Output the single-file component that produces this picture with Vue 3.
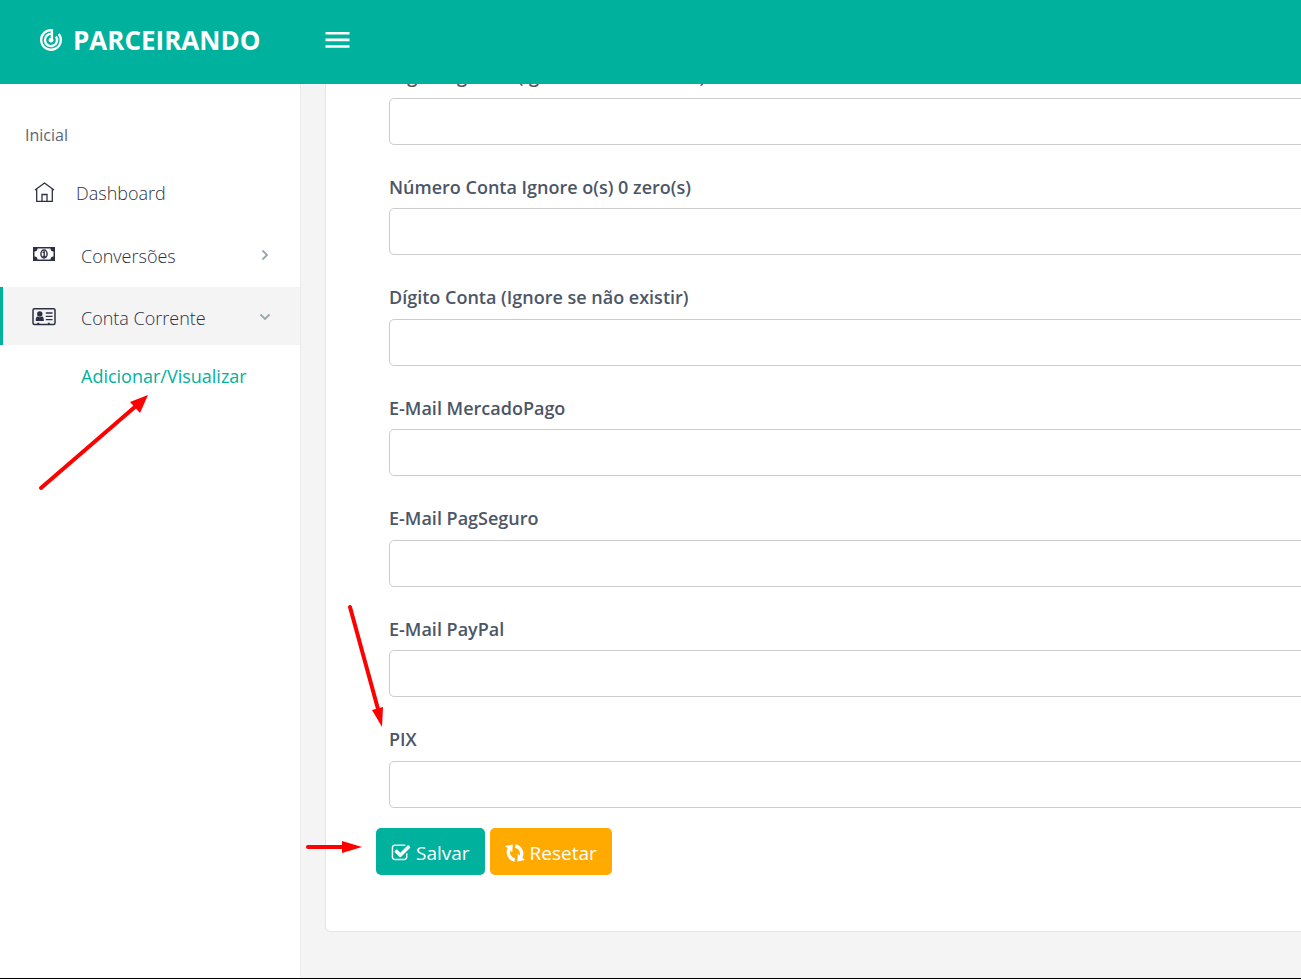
<script setup>
const fields = [
  { id: 'digito-agencia', label: 'Dígito Agência (Ignore se não existir)' },
  { id: 'numero-conta', label: 'Número Conta Ignore o(s) 0 zero(s)' },
  { id: 'digito-conta', label: 'Dígito Conta (Ignore se não existir)' },
  { id: 'mercadopago', label: 'E-Mail MercadoPago' },
  { id: 'pagseguro', label: 'E-Mail PagSeguro' },
  { id: 'paypal', label: 'E-Mail PayPal' },
  { id: 'pix', label: 'PIX' },
]
</script>

<template>
  <div class="app">
    <header class="topbar">
      <a class="brand" href="#">
        <svg class="brand-icon" viewBox="0 0 22 22" fill="none" stroke="#fff" stroke-width="2.4">
          <path d="M12 1.200A9.800 9.800 0 1 0 18.800 5" />
          <path d="M12 5A6.100 6.100 0 1 0 16 7.500" />
          <path d="M11.900 0.100V11" />
          <circle cx="11" cy="11.200" r="2.400" fill="#fff" stroke="none" />
        </svg>
        <span>PARCEIRANDO</span>
      </a>
      <button class="toggle" type="button" aria-label="Menu">
        <svg viewBox="0 0 24 16" fill="#fff"><path d="M0 0h24v2.6H0zM0 6.6h24v2.6H0zM0 13.2h24v2.6H0z" /></svg>
      </button>
    </header>

    <div class="body">
      <nav class="sidebar">
        <p class="section">Inicial</p>
        <a class="item home" href="#">
          <svg class="icon" viewBox="0 0 24 20" fill="none" stroke="#2b3044" stroke-width="1.3">
            <path d="M3 8L12.500 1L22 8M4.700 7V19.300H20.300V7M10 19V12.500H15V19" />
          </svg>
          <span>Dashboard</span>
        </a>
        <a class="item" href="#">
          <svg class="icon" viewBox="0 0 24 20">
            <path fill="#2b3044" fill-rule="evenodd" d="M1 2h22v14H1zM5.500 3.500A3 3 0 0 1 2.500 6.500V11.500A3 3 0 0 1 5.500 14.500H18.500A3 3 0 0 1 21.500 11.500V6.500A3 3 0 0 1 18.500 3.500z" />
            <ellipse cx="12" cy="9" rx="3.100" ry="4" fill="none" stroke="#2b3044" stroke-width="1.400" />
            <path fill="none" stroke="#2b3044" stroke-width="1.300" d="M10.600 7.800L12.200 6.800V11.500M10.500 11.500H13.700" />
          </svg>
          <span>Conversões</span>
          <svg class="caret" viewBox="0 0 12 12"><path d="M3.500 1.500L8 6L3.500 10.500" /></svg>
        </a>
        <a class="item active" href="#">
          <svg class="icon" viewBox="0 0 24 20">
            <rect x="1" y="1.800" width="22" height="15.600" rx="1.500" fill="none" stroke="#2b3044" stroke-width="1.500" />
            <path fill="#2b3044" d="M3.800 14C3.500 11 4.500 9.500 5.600 9.500Q7.800 11 10 9.500C11.100 9.500 12.100 11 11.800 14zM5.300 15.800h2v1.500h-2zM15.800 15.800h2v1.500h-2z" />
            <circle cx="7.800" cy="7" r="2.700" fill="#2b3044" />
            <path stroke="#2b3044" stroke-width="1.300" d="M13.800 6H20.500M13.800 9.300H20.500M13.800 12.600H20.500" />
          </svg>
          <span>Conta Corrente</span>
          <svg class="caret" viewBox="0 0 12 12"><path d="M1.500 3.500L6 8L10.500 3.500" /></svg>
        </a>
        <a class="subitem" href="#">Adicionar/Visualizar</a>
      </nav>

      <main class="content">
        <form class="card" @submit.prevent>
          <div class="fields">
            <div v-for="f in fields" :key="f.id" class="field">
              <label :for="f.id">{{ f.label }}</label>
              <input :id="f.id" type="text" />
            </div>
          </div>
          <div class="actions">
            <button class="btn save" type="submit">
              <svg viewBox="0 0 1792 1792" fill="#fff">
                <path d="M1472 930v318q0 119-84.500 203.500t-203.500 84.500h-832q-119 0-203.500-84.500t-84.500-203.500v-832q0-119 84.500-203.500t203.500-84.500h832q63 0 117 25 15 7 18 23 3 17-9 29l-49 49q-10 10-23 10-3 0-9-2-23-6-45-6h-832q-66 0-113 47t-47 113v832q0 66 47 113t113 47h832q66 0 113-47t47-113v-254q0-13 9-22l64-64q10-10 23-10 6 0 12 3 20 8 20 29zm231-489l-814 814q-24 24-57 24t-57-24l-430-430q-24-24-24-57t24-57l110-110q24-24 57-24t57 24l263 263 647-647q24-24 57-24t57 24l110 110q24 24 24 57t-24 57z" />
              </svg>
              <span>Salvar</span>
            </button>
            <button class="btn reset" type="reset">
              <svg viewBox="0 0 20 20">
                <path fill="none" stroke="#fff" stroke-width="3.400" d="M4 6C2 10.500 4.500 16 9.800 17M16 14C18 9.500 15.500 4 10.200 3" />
                <path fill="#fff" d="M0 3L7.800 1.500L7.200 9.300zM20 17L12.200 18.500L12.800 10.700z" />
              </svg>
              <span>Resetar</span>
            </button>
          </div>
        </form>
      </main>
    </div>

    <svg class="arrow to-submenu" viewBox="0 0 112 97">
      <path class="shaft" d="M3 94L98 12" /><path class="head" d="M110 1L92 8L102 19z" />
    </svg>
    <svg class="arrow to-pix" viewBox="0 0 40 126">
      <path class="shaft" d="M4 4L32 106" /><path class="head" d="M36 124L26 107L37 104z" />
    </svg>
    <svg class="arrow to-save" viewBox="0 0 60 14">
      <path class="shaft" d="M4 7H42" /><path class="head" d="M58 7L38 1V13z" />
    </svg>
  </div>
</template>

<style>
body {
  margin: 0;
}
</style>

<style scoped>
.app {
  position: relative;
  box-sizing: border-box;
  display: flex;
  flex-direction: column;
  height: 100vh;
  overflow: hidden;
  border-bottom: 1px solid #000;
  background: #f4f4f4;
  color: #2b3044;
  font-family: "Open Sans", "Noto Sans", sans-serif;
}
.topbar {
  display: flex;
  align-items: center;
  flex: none;
  height: 84px;
  padding-bottom: 4px;
  box-sizing: border-box;
  background: #00b19d;
}
.brand {
  display: flex;
  align-items: center;
  gap: 11px;
  box-sizing: border-box;
  width: 325px;
  padding-left: 40px;
  color: #fff;
  font-size: 26px;
  font-weight: 700;
  text-decoration: none;
}
.brand-icon {
  width: 22px;
  height: 22px;
}
.toggle {
  padding: 0;
  border: 0;
  background: none;
}
.toggle svg {
  display: block;
  width: 25px;
  height: 16px;
}
.body {
  display: flex;
  flex: 1;
  min-height: 0;
}
.sidebar {
  flex: none;
  width: 300px;
  border-right: 1px solid #ebebeb;
  background: #fff;
}
.section {
  margin: 40px 0 17px 25px;
  color: #5c6577;
  font-size: 16px;
  line-height: 22px;
}
.item {
  display: flex;
  align-items: center;
  gap: 25px;
  box-sizing: border-box;
  height: 58px;
  margin-bottom: 4px;
  padding: 2px 29px 0;
  border-left: 3px solid transparent;
  color: inherit;
  font-size: 18px;
  font-weight: 300;
  text-decoration: none;
}
.item span {
  flex: 1;
  padding-top: 1px;
}
.home {
  gap: 20px;
  padding-top: 0;
}
.active {
  border-left-color: #00b19d;
  background: #f4f4f4;
}
.icon {
  width: 24px;
  height: 20px;
}
.caret {
  width: 12px;
  height: 12px;
  fill: none;
  stroke: #98a6ad;
  stroke-width: 1.8;
}
.subitem {
  display: block;
  padding-left: 81px;
  color: #00b19d;
  font-size: 18px;
  line-height: 54px;
  text-decoration: none;
}
.content {
  display: flex;
  flex: 1;
  flex-direction: column;
  justify-content: flex-end;
  min-width: 0;
  overflow: hidden;
}
.card {
  display: flex;
  flex: none;
  flex-direction: column;
  gap: 20px;
  margin: 0 -80px 46px 24px;
  padding: 30px 50px 56px;
  border: 1px solid #e5e5e5;
  border-radius: 6px;
  background: #fff;
}
.fields {
  display: flex;
  flex-direction: column;
  gap: 30px;
  padding: 0 13px;
}
.field {
  display: flex;
  flex-direction: column;
  gap: 8px;
}
.field label {
  color: #4c5667;
  font-size: 18px;
  font-weight: 600;
  line-height: 1.42;
}
.field input {
  box-sizing: border-box;
  width: 100%;
  height: 47px;
  padding: 0 16px;
  border: 1px solid #ccc;
  border-radius: 5px;
  background: #fff;
  font: inherit;
}
.actions {
  display: flex;
  gap: 5px;
}
.btn {
  display: flex;
  align-items: center;
  gap: 5px;
  height: 47px;
  padding: 2px 15px 0;
  border: 0;
  border-radius: 5px;
  color: #fff;
  font-family: inherit;
  font-size: 19px;
}
.btn svg {
  width: 20px;
  height: 20px;
}
.save {
  background: #00b19d;
}
.reset {
  background: #ffaa00;
}
.arrow {
  position: absolute;
  pointer-events: none;
}
.shaft {
  fill: none;
  stroke: #f00;
  stroke-width: 4;
  stroke-linecap: round;
}
.head {
  fill: #f00;
}
.to-submenu {
  left: 38px;
  top: 394px;
  width: 112px;
  height: 97px;
}
.to-pix {
  left: 346px;
  top: 603px;
  width: 40px;
  height: 126px;
}
.to-save {
  left: 304px;
  top: 840px;
  width: 60px;
  height: 14px;
}
</style>
